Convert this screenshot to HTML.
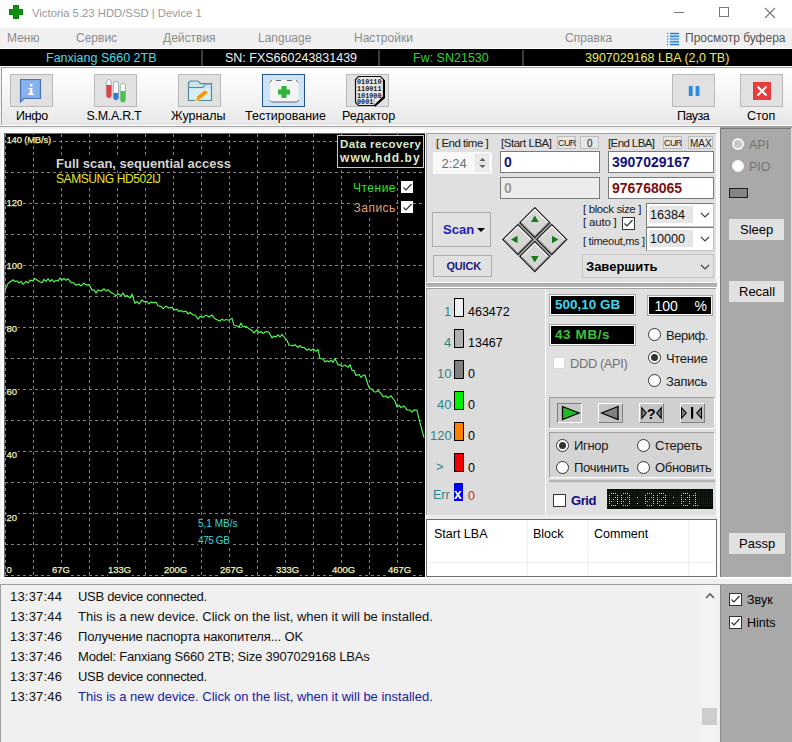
<!DOCTYPE html>
<html><head><meta charset="utf-8">
<style>
*{box-sizing:border-box;margin:0;padding:0}
html,body{width:792px;height:742px;overflow:hidden;background:#f0f0f0;font-family:"Liberation Sans",sans-serif;font-size:12px;color:#000}
.a{position:absolute}
.t{position:absolute;white-space:pre;line-height:1}
#title{left:0;top:0;width:792px;height:28px;background:#fff}
#menu{left:0;top:28px;width:792px;height:20px;background:#f0f0f0}
#menu .t{color:#8c8c8c;font-size:12px;top:3.5px}
#info{left:0;top:49px;width:792px;height:17px;background:#000}
#info .t{font-size:12.5px;top:3px}
.sep{position:absolute;top:1px;width:2px;height:16px;background:#3c3c3c}
#tb{left:1px;top:67px;width:791px;height:58px;border-top:1px solid #a0a0a0;border-left:1px solid #a0a0a0;background:linear-gradient(#ffffff,#f2f2f2 60%,#e6e6e6)}
.tbtn{position:absolute;width:43px;height:33px;background:#e1e1e1;border:1px solid #b9b9b9}
.tbtn.on{background:#cde4f7;border-color:#24528a}
.tlab{position:absolute;margin-top:-1px;font-size:12.5px;color:#000;white-space:pre;line-height:1}

.pnl{position:absolute;background:#e0e0e0;border-top:1px solid #a0a0a0;border-left:1px solid #a0a0a0;border-right:1px solid #fff;border-bottom:1px solid #fff}
.btn{position:absolute;background:#e1e1e1;border:1px solid #adadad}
.inp{position:absolute;background:#fff;border:1px solid #7a7a7a}
.rad{position:absolute;width:13px;height:13px;border-radius:50%;background:#fff;border:1px solid #333}
.rad.on::after{content:"";position:absolute;left:2px;top:2px;width:7px;height:7px;border-radius:50%;background:#333}
.chk{position:absolute;width:13px;height:13px;background:#fff;border:1px solid #333}
.lbl{position:absolute;white-space:pre;line-height:1;font-size:12px;color:#000}
.gl{font-size:9.5px;color:#f0f0b8;background:#000;padding:0 1px 1px 0;-webkit-text-stroke:0.25px #f0f0b8}
</style></head><body>

<!-- title bar -->
<div id="title" class="a">
  <svg class="a" style="left:9px;top:5px" width="14" height="14" viewBox="0 0 14 14"><path d="M4 0h6v4h4v6h-4v4h-6v-4h-4v-6h4z" fill="#087a08"/><path d="M4.6 0.6h4.8v4h4v4.8h-4v4h-4.8v-4h-4v-4.8h4z" fill="#0f8f0f"/></svg>
  <div class="t" style="left:32px;top:8px;font-size:11.3px;color:#999">Victoria 5.23 HDD/SSD | Device 1</div>
  <div class="a" style="left:674px;top:12px;width:10px;height:1px;background:#777"></div>
  <div class="a" style="left:719px;top:7px;width:10px;height:10px;border:1px solid #777"></div>
  <svg class="a" style="left:764px;top:7px" width="12" height="12" viewBox="0 0 12 12"><path d="M1 1L11 11M11 1L1 11" stroke="#777" stroke-width="1.1"/></svg>
</div>

<!-- menu -->
<div id="menu" class="a">
  <div class="t" style="left:7px">Меню</div>
  <div class="t" style="left:76px">Сервис</div>
  <div class="t" style="left:163px">Действия</div>
  <div class="t" style="left:258px">Language</div>
  <div class="t" style="left:354px">Настройки</div>
  <div class="t" style="left:565px">Справка</div>
  <svg class="a" style="left:660px;top:0" width="30" height="20" viewBox="660 28 30 20"><rect x="669.5" y="33" width="10" height="12" fill="#bfe4f8"/><g fill="#2f78c0"><rect x="667" y="32.8" width="1.2" height="1.2"/><rect x="667" y="35.6" width="1.2" height="1.2"/><rect x="667" y="38.4" width="1.2" height="1.2"/><rect x="667" y="41.2" width="1.2" height="1.2"/><rect x="667" y="44" width="1.2" height="1.2"/><rect x="670" y="32.8" width="9" height="1.3"/><rect x="670" y="35.6" width="9" height="1.3"/><rect x="670" y="38.4" width="9" height="1.3" fill="#4a94d8"/><rect x="670" y="41.2" width="9" height="1.3"/><rect x="670" y="44" width="9" height="1.3"/></g></svg>
  <div class="t" style="left:685px;color:#555">Просмотр буфера</div>
</div>
<div class="a" style="left:0;top:48px;width:792px;height:1px;background:#fff"></div>

<!-- info bar -->
<div id="info" class="a">
  <div class="t" style="left:46px;color:#48d8e8">Fanxiang S660 2TB</div>
  <div class="sep" style="left:201px"></div>
  <div class="t" style="left:225px;color:#f0f0f0">SN: FXS660243831439</div>
  <div class="sep" style="left:378px"></div>
  <div class="t" style="left:413px;color:#30d030">Fw: SN21530</div>
  <div class="sep" style="left:522px"></div>
  <div class="t" style="left:585px;color:#e8e860">3907029168 LBA (2,0 TB)</div>
</div>
<div class="a" style="left:0;top:66px;width:792px;height:1px;background:#fff"></div>

<!-- toolbar -->
<div id="tb" class="a"></div><div class="a" style="left:0;top:125px;width:792px;height:1px;background:#fff"></div>
<div class="tbtn" style="left:10px;top:74px"></div>
<div class="tbtn" style="left:94px;top:74px"></div>
<div class="tbtn" style="left:178px;top:74px"></div>
<div class="tbtn on" style="left:262px;top:74px"></div>
<div class="tbtn" style="left:346px;top:74px"></div>
<div class="tbtn" style="left:672px;top:74px"></div>
<div class="tbtn" style="left:740px;top:74px"></div>
<svg class="a" style="left:0;top:66px" width="792" height="44" viewBox="0 66 792 44">
 <!-- info bubble -->
 <path d="M20.5 79.5H40.5V98.5H24L20.5 102z" fill="#7fadea" stroke="#4a76b4" stroke-width="1.2"/>
 <path d="M22 81H39V97H22z" fill="#86b3ec"/>
 <rect x="30" y="84" width="2.4" height="2.4" fill="#fff"/>
 <path d="M28.5 88H32.4V93.5H34V95H28V93.5H29.8V89.3H28.5z" fill="#fff"/>
 <!-- smart tubes -->
 <rect x="106.3" y="79.5" width="5.2" height="18.5" rx="2.6" fill="#f4f4f4" stroke="#a0a8b8" stroke-width="0.8"/>
 <path d="M106.5 85H111.3V95.4A2.4 2.4 0 0 1 106.5 95.4z" fill="#e04040"/>
 <rect x="113.3" y="81.3" width="5.2" height="18.8" rx="2.6" fill="#f4f8ff" stroke="#8aa0c8" stroke-width="0.8"/>
 <path d="M113.5 93H118.3V97.5A2.4 2.4 0 0 1 113.5 97.5z" fill="#2a7ad8"/>
 <rect x="120.3" y="83.3" width="5.2" height="19" rx="2.6" fill="#f4fff4" stroke="#90b090" stroke-width="0.8"/>
 <path d="M120.5 91H125.3V99.8A2.4 2.4 0 0 1 120.5 99.8z" fill="#4cc04c"/>
 <!-- folder -->
 <path d="M188.5 83L190.5 81H198L200.5 83.5H211.5V100.5H188.5z" fill="#c8e4ef" stroke="#5a8898" stroke-width="1.2"/>
 <path d="M188.5 87.5H203L205 84H211.5" fill="none" stroke="#5a8898" stroke-width="1.1"/>
 <path d="M189.5 88.5H210.5V99.5H189.5z" fill="#d6eef6"/>
 <path d="M195 102L196.8 96L205 89.8L208.5 92.8L200.3 99.2z" fill="#f5980f" stroke="#fff" stroke-width="0.7"/>
 <!-- first aid -->
 <rect x="270" y="80" width="28.5" height="22" fill="#f4f4f4"/>
 <path d="M269.5 82.5L272 80M276 80.5H281M287 80.5H292M296 80L298.5 82.5M269.5 100L271.5 102H297L299 100" fill="none" stroke="#505a68" stroke-width="0.9"/>
 <path d="M281.5 86H286.5V89.5H290V94.5H286.5V98H281.5V94.5H278V89.5H281.5z" fill="#2fb43a"/>
 <!-- editor paper -->
 <path d="M358.5 76.5H380.5L383.5 79.5V97L374 105.5H358.5L355.5 102.5V79.5z" fill="#e6e6e6" stroke="#101010" stroke-width="1.2"/>
 <path d="M384 80V97.5L374.5 106" fill="none" stroke="#000" stroke-width="2"/>
 <path d="M374 105L374.5 98.5L382 97z" fill="#f8f8f8" stroke="#808080" stroke-width="0.6"/>
 <g font-family="Liberation Mono" font-size="7.6" fill="#1a1a1a" font-weight="bold">
  <text x="357" y="84.3" textLength="24.5" lengthAdjust="spacingAndGlyphs">010110</text>
  <text x="357" y="90.9" textLength="24.5" lengthAdjust="spacingAndGlyphs">110011</text>
  <text x="357" y="97.5" textLength="24.5" lengthAdjust="spacingAndGlyphs">101000</text>
  <text x="357" y="104" textLength="16.3" lengthAdjust="spacingAndGlyphs">0001</text>
 </g>
 <!-- pause -->
 <rect x="688.8" y="86" width="3.8" height="10" fill="#2a8ae0"/>
 <rect x="695.6" y="86" width="3.8" height="10" fill="#2a8ae0"/>
 <!-- stop -->
 <rect x="753" y="82" width="18" height="18" fill="#e83c3c"/>
 <path d="M757.5 86.5L766.5 95.5M766.5 86.5L757.5 95.5" stroke="#fff" stroke-width="2"/>
</svg>
<div class="tlab" style="left:16px;top:111px;letter-spacing:-0.3px">Инфо</div>
<div class="tlab" style="left:86.5px;top:111px;letter-spacing:-0.3px">S.M.A.R.T</div>
<div class="tlab" style="left:171px;top:111px">Журналы</div>
<div class="tlab" style="left:245px;top:111px">Тестирование</div>
<div class="tlab" style="left:342px;top:111px;letter-spacing:-0.1px">Редактор</div>
<div class="tlab" style="left:677px;top:111px;letter-spacing:-0.5px">Пауза</div>
<div class="tlab" style="left:747px;top:111px">Стоп</div>

<!-- graph -->
<div class="a" style="left:0;top:126px;width:426px;height:459px;background:#f0f0f0;border-top:1px solid #a0a0a0"></div>
<div class="a" style="left:1px;top:129px;width:425px;height:451px;background:#fff"></div>
<div class="a" style="left:4px;top:133px;width:421px;height:444px;background:#000;border-top:1px solid #696969;border-left:1px solid #696969"></div>
<svg class="a" style="left:0;top:0" width="426" height="580" viewBox="0 0 426 580">
<g stroke="#808080" stroke-width="1" stroke-dasharray="3 3">
<line x1="5.5" y1="134" x2="5.5" y2="577"/>
<line x1="33.5" y1="134" x2="33.5" y2="577"/>
<line x1="61.5" y1="134" x2="61.5" y2="577"/>
<line x1="89.5" y1="134" x2="89.5" y2="577"/>
<line x1="117.5" y1="134" x2="117.5" y2="577"/>
<line x1="145.5" y1="134" x2="145.5" y2="577"/>
<line x1="173.5" y1="134" x2="173.5" y2="577"/>
<line x1="201.5" y1="134" x2="201.5" y2="577"/>
<line x1="229.5" y1="134" x2="229.5" y2="577"/>
<line x1="257.5" y1="134" x2="257.5" y2="577"/>
<line x1="285.5" y1="134" x2="285.5" y2="577"/>
<line x1="313.5" y1="134" x2="313.5" y2="577"/>
<line x1="341.5" y1="134" x2="341.5" y2="577"/>
<line x1="369.5" y1="134" x2="369.5" y2="577"/>
<line x1="397.5" y1="134" x2="397.5" y2="577"/>
<line x1="5" y1="141.5" x2="425" y2="141.5"/>
<line x1="5" y1="172.5" x2="425" y2="172.5"/>
<line x1="5" y1="203.5" x2="425" y2="203.5"/>
<line x1="5" y1="234.5" x2="425" y2="234.5"/>
<line x1="5" y1="265.5" x2="425" y2="265.5"/>
<line x1="5" y1="296.5" x2="425" y2="296.5"/>
<line x1="5" y1="327.5" x2="425" y2="327.5"/>
<line x1="5" y1="358.5" x2="425" y2="358.5"/>
<line x1="5" y1="389.5" x2="425" y2="389.5"/>
<line x1="5" y1="420.5" x2="425" y2="420.5"/>
<line x1="5" y1="451.5" x2="425" y2="451.5"/>
<line x1="5" y1="482.5" x2="425" y2="482.5"/>
<line x1="5" y1="513.5" x2="425" y2="513.5"/>
<line x1="5" y1="544.5" x2="425" y2="544.5"/>
<line x1="5" y1="575.5" x2="425" y2="575.5"/>
</g>
<polyline fill="none" stroke="#52fa52" stroke-width="1.15" points="5,290.0 8,283.5 11,281.2 13,279.7 15,281.5 17,280.8 19,282.9 21,281.4 23,284.3 26,281.2 28,283.0 30,280.2 33,280.9 35,278.3 37,280.0 40,281.7 42,282.7 44,279.4 46,281.3 48,278.7 50,281.3 52,279.5 54,281.9 56,280.3 58,281.0 60,278.2 62,280.2 64,278.3 66,280.3 68,278.7 71,282.7 73,282.5 76,285.0 79,284.2 81,285.9 84,283.0 86,284.9 89,284.6 92,289.9 94,290.1 96,292.9 98,289.9 101,291.0 104,288.7 106,290.9 108,289.7 111,292.6 113,293.4 116,295.8 118,293.8 121,295.5 123,293.1 125,296.6 127,295.5 130,297.9 132,294.2 135,303.3 137,301.5 139,303.8 142,300.1 144,301.6 147,301.6 149,304.0 151,301.9 154,302.9 156,302.3 158,305.8 161,306.4 163,308.7 166,306.1 169,308.1 172,307.1 174,310.1 177,309.2 179,311.5 181,310.5 183,311.9 186,311.2 188,313.9 190,312.2 193,314.9 195,315.0 198,319.0 200,316.4 203,317.4 206,315.1 209,317.0 212,315.1 215,318.8 218,320.3 220,321.1 222,319.2 224,320.4 226,319.5 229,320.2 232,318.3 234,325.3 236,325.5 239,327.1 241,323.2 243,326.9 246,326.4 249,328.8 252,330.4 254,332.9 257,330.0 259,332.9 261,331.5 263,333.4 265,332.1 267,331.5 269,332.5 272,337.8 274,336.2 276,337.0 278,334.9 280,337.0 282,334.5 285,338.1 287,340.2 289,345.1 291,345.2 293,345.8 295,344.7 298,347.4 300,345.5 302,347.5 304,347.6 307,350.3 309,349.0 311,350.6 313,349.0 316,351.2 318,349.5 320,358.5 323,359.0 325,362.0 327,360.7 329,361.8 331,360.3 333,362.2 335,358.6 338,365.2 340,364.7 342,366.6 345,365.1 348,367.2 350,364.9 352,370.2 354,370.6 356,375.5 359,374.4 361,377.3 363,375.3 365,375.2 368,384.7 370,389.0 372,389.0 374,391.7 376,392.0 378,390.6 381,393.5 383,396.5 386,396.0 388,398.0 391,395.8 393,398.5 395,401.2 397,407.0 399,405.4 401,407.5 404,406.0 407,409.9 410,410.0 412,412.1 414,409.9 417,410.2 419,419.1 424,437.7"/>
</svg>

<div class="t gl" style="left:6.5px;top:135.2px;letter-spacing:-0.2px">140 (MB/s)</div>
<div class="t gl" style="left:6.5px;top:198.1px">120</div>
<div class="t gl" style="left:6.5px;top:261.2px">100</div>
<div class="t gl" style="left:6.5px;top:324.0px">80</div>
<div class="t gl" style="left:6.5px;top:386.8px">60</div>
<div class="t gl" style="left:6.5px;top:449.9px">40</div>
<div class="t gl" style="left:6.5px;top:513.1px">20</div>
<div class="t gl" style="left:6.5px;top:564.9px">0</div>
<div class="t gl" style="left:52px;top:565.2px">67G</div>
<div class="t gl" style="left:108px;top:565.2px">133G</div>
<div class="t gl" style="left:164px;top:565.2px">200G</div>
<div class="t gl" style="left:220px;top:565.2px">267G</div>
<div class="t gl" style="left:276px;top:565.2px">333G</div>
<div class="t gl" style="left:332px;top:565.2px">400G</div>
<div class="t gl" style="left:388px;top:565.2px">467G</div>
<div class="t" style="left:56px;top:156.8px;font-size:13px;font-weight:bold;color:#d4d4d4;background:#000;padding:0 1px 1px 0">Full scan, sequential access</div>
<div class="t" style="left:56px;top:173.3px;font-size:12px;letter-spacing:-0.42px;color:#e8e820;background:#000;padding-bottom:2px">SAMSUNG HD502IJ</div>
<div class="a" style="left:337px;top:135px;width:87px;height:33px;border:1px solid #c8c8c8;background:#000"></div>
<div class="t" style="left:340px;top:139px;font-size:11.5px;font-weight:bold;letter-spacing:0.4px;color:#dce8cc">Data recovery</div>
<div class="t" style="left:340px;top:152px;font-size:12px;font-weight:bold;letter-spacing:1.05px;color:#dce8cc">www.hdd.by</div>
<div class="t" style="left:353px;top:181.5px;font-size:12px;letter-spacing:0.5px;color:#30e030;background:#000;padding-bottom:2px">Чтение</div>
<div class="t" style="left:353.5px;top:201.5px;font-size:12px;letter-spacing:0.5px;color:#e0a070;background:#000;padding-bottom:2px">Запись</div>
<svg class="a" style="left:401px;top:181px" width="12" height="12" viewBox="0 0 12 12"><rect x="0" y="0" width="12" height="12" fill="#fff"/><path d="M2.5 6.5L5 9L10.5 3" fill="none" stroke="#333" stroke-width="1.2"/></svg>
<svg class="a" style="left:401px;top:201px" width="12" height="12" viewBox="0 0 12 12"><rect x="0" y="0" width="12" height="12" fill="#fff"/><path d="M2.5 6.5L5 9L10.5 3" fill="none" stroke="#333" stroke-width="1.2"/></svg>
<div class="t" style="left:198px;top:518.5px;font-size:10px;color:#38dada;background:#000;padding-bottom:1px">5,1 MB/s</div>
<div class="t" style="left:198px;top:535.5px;font-size:10px;letter-spacing:-0.4px;color:#38dada;background:#000;padding-bottom:1px">475 GB</div>

<!-- right gray panel -->
<div class="a" style="left:717px;top:126px;width:3px;height:459px;background:#f8f8f8"></div>
<div class="a" style="left:720px;top:126px;width:72px;height:453px;background:#a9a9a9;border-top:2px solid #a0a0a0"></div><div class="a" style="left:720px;top:128px;width:71px;height:451px;border-left:1px solid #7a7a7a;border-top:1px solid #7a7a7a"></div><div class="a" style="left:791px;top:128px;width:1px;height:451px;background:#dcdcdc"></div>
<div class="a" style="left:426px;top:126px;width:294px;height:7px;background:#f0f0f0;border-top:1px solid #a0a0a0"></div>
<div class="a" style="left:426px;top:130px;width:291px;height:3px;background:#fbfbfb"></div>

<!-- panel 1 -->
<div class="pnl" style="left:426px;top:133px;width:291px;height:150px"></div>
<div class="lbl" style="left:436px;top:138px;font-size:11.5px;letter-spacing:-0.5px;color:#202020">[ End time ]</div>
<div class="a" style="left:433px;top:152px;width:59px;height:22px;background:#f8f8f8"></div>
<div class="lbl" style="left:441.5px;top:157px;font-size:13px;color:#6e6e6e">2:24</div>
<div class="a" style="left:475px;top:154px;width:14px;height:18px;background:#ececec;border:1px solid #e4e4e4"></div>
<svg class="a" style="left:476px;top:154px" width="13" height="18" viewBox="0 0 13 18"><path d="M3.5 7L6.5 4L9.5 7z" fill="#606060"/><path d="M3.5 11L6.5 14L9.5 11z" fill="#606060"/><line x1="1" y1="9" x2="12" y2="9" stroke="#d8d8d8"/></svg>

<div class="lbl" style="left:501px;top:138px;font-size:11.5px;letter-spacing:-0.46px;color:#202020">[Start LBA]</div>
<div class="btn" style="left:557px;top:136px;width:19px;height:13px;background:#e6e6e6;border-color:#bdbdbd"></div>
<div class="lbl" style="left:558px;top:139px;font-size:9px;letter-spacing:-0.6px;color:#202020">CUR</div>
<div class="btn" style="left:580px;top:136px;width:19px;height:13px;background:#e6e6e6;border-color:#bdbdbd"></div>
<div class="lbl" style="left:587px;top:139px;font-size:10px;color:#202020">0</div>
<div class="inp" style="left:500px;top:151px;width:100px;height:22px"></div>
<div class="lbl" style="left:504px;top:155px;font-size:14px;font-weight:bold;color:#12127a">0</div>
<div class="inp" style="left:500px;top:177px;width:100px;height:22px;background:#ececec"></div>
<div class="lbl" style="left:504px;top:181px;font-size:14px;font-weight:bold;color:#9a9a9a">0</div>

<div class="lbl" style="left:608px;top:138px;font-size:11.5px;letter-spacing:-0.6px;color:#202020">[End LBA]</div>
<div class="btn" style="left:663px;top:136px;width:19px;height:13px;background:#e6e6e6;border-color:#bdbdbd"></div>
<div class="lbl" style="left:664px;top:139px;font-size:9px;letter-spacing:-0.6px;color:#202020">CUR</div>
<div class="btn" style="left:688px;top:136px;width:25px;height:13px;background:#e6e6e6;border-color:#bdbdbd"></div>
<div class="lbl" style="left:690px;top:139px;font-size:10px;color:#202020">MAX</div>
<div class="inp" style="left:608px;top:151px;width:106px;height:22px"></div>
<div class="lbl" style="left:612px;top:155px;font-size:14px;font-weight:bold;color:#12127a">3907029167</div>
<div class="inp" style="left:608px;top:177px;width:106px;height:22px"></div>
<div class="lbl" style="left:612px;top:181px;font-size:14px;font-weight:bold;color:#7a1010">976768065</div>

<div class="btn" style="left:432px;top:212px;width:59px;height:35px"></div>
<div class="lbl" style="left:443px;top:223px;font-size:13px;font-weight:bold;color:#2020b8">Scan</div>
<svg class="a" style="left:477px;top:228px" width="9" height="6" viewBox="0 0 9 6"><path d="M0 0H8L4 4z" fill="#000"/></svg>
<div class="btn" style="left:433px;top:255px;width:59px;height:22px"></div>
<div class="lbl" style="left:446.5px;top:261px;font-size:11px;letter-spacing:-0.2px;font-weight:bold;color:#202078">QUICK</div>

<svg class="a" style="left:500px;top:205px" width="70" height="70" viewBox="0 0 70 70">
 <g transform="translate(34.8 34.6) rotate(45)">
  <rect x="-23.3" y="-23.3" width="46.6" height="46.6" fill="#a0a0a0"/>
  <rect x="-22.5" y="-22.5" width="21" height="21" fill="#d6d6d6" stroke="#000" stroke-width="1"/><path d="M-21.5 -2.5V-21.5H-2.5" fill="none" stroke="#fff" stroke-width="1"/><path d="M-2.5 -21.5V-2.5H-21.5" fill="none" stroke="#909090" stroke-width="1"/><rect x="1.5" y="-22.5" width="21" height="21" fill="#d6d6d6" stroke="#000" stroke-width="1"/><path d="M2.5 -2.5V-21.5H21.5" fill="none" stroke="#fff" stroke-width="1"/><path d="M21.5 -21.5V-2.5H2.5" fill="none" stroke="#909090" stroke-width="1"/><rect x="-22.5" y="1.5" width="21" height="21" fill="#d6d6d6" stroke="#000" stroke-width="1"/><path d="M-21.5 21.5V2.5H-2.5" fill="none" stroke="#fff" stroke-width="1"/><path d="M-2.5 2.5V21.5H-21.5" fill="none" stroke="#909090" stroke-width="1"/><rect x="1.5" y="1.5" width="21" height="21" fill="#d6d6d6" stroke="#000" stroke-width="1"/><path d="M2.5 21.5V2.5H21.5" fill="none" stroke="#fff" stroke-width="1"/><path d="M21.5 2.5V21.5H2.5" fill="none" stroke="#909090" stroke-width="1"/>
 </g>
 <path d="M34.8 10.5L31 17H38.6z" fill="#157a15"/>
 <path d="M34.8 57.5L31 51H38.6z" fill="#157a15"/>
 <path d="M11 34.5L17.5 30.7V38.3z" fill="#157a15"/>
 <path d="M58.5 34.5L52 30.7V38.3z" fill="#157a15"/>
</svg>

<div class="lbl" style="left:583px;top:204px;font-size:11.5px;letter-spacing:-0.38px;color:#202020">[ block size ]</div>
<div class="lbl" style="left:583px;top:217px;font-size:11.5px;letter-spacing:-0.2px;color:#202020">[ auto ]</div>
<div class="chk" style="left:622px;top:217px;width:13px;height:13px"></div>
<svg class="a" style="left:622px;top:217px" width="13" height="13" viewBox="0 0 13 13"><path d="M2.5 6.5L5 9L10.5 3" fill="none" stroke="#333" stroke-width="1.2"/></svg>
<div class="lbl" style="left:583px;top:236px;font-size:11px;letter-spacing:-0.3px;color:#202020">[ timeout,ms ]</div>
<div class="inp" style="left:646px;top:203px;width:68px;height:24px;border:1px solid #7a7a7a;border-right-color:#c0c0c0;border-bottom-color:#c0c0c0"></div>
<div class="a" style="left:649px;top:206px;width:44px;height:17px;background:#e6e6e6"></div>
<div class="lbl" style="left:650px;top:208.5px;font-size:12.6px;color:#101010">16384</div>
<svg class="a" style="left:700px;top:212px" width="10" height="7" viewBox="0 0 10 7"><path d="M1 1L5 5L9 1" fill="none" stroke="#404040" stroke-width="1.1"/></svg>
<div class="inp" style="left:646px;top:227px;width:68px;height:24px;border:1px solid #7a7a7a;border-right-color:#c0c0c0;border-bottom-color:#c0c0c0"></div>
<div class="a" style="left:649px;top:230px;width:44px;height:17px;background:#e6e6e6"></div>
<div class="lbl" style="left:650px;top:232.5px;font-size:12.6px;color:#101010">10000</div>
<svg class="a" style="left:700px;top:236px" width="10" height="7" viewBox="0 0 10 7"><path d="M1 1L5 5L9 1" fill="none" stroke="#404040" stroke-width="1.1"/></svg>
<div class="btn" style="left:582px;top:254px;width:132px;height:24px;background:#e1e1e1;border-color:#c4c4c4"></div>
<div class="lbl" style="left:586px;top:260px;font-size:13px;font-weight:bold;color:#000">Завершить</div>
<svg class="a" style="left:700px;top:264px" width="10" height="7" viewBox="0 0 10 7"><path d="M1 1L5 5L9 1" fill="none" stroke="#404040" stroke-width="1.1"/></svg>

<!-- separator band -->
<div class="a" style="left:426px;top:283px;width:291px;height:5px;background:#b4b4b4;border-top:1px solid #a0a0a0;border-bottom:1px solid #fff"></div>


<!-- panel 2 -->
<div class="a" style="left:426px;top:288px;width:291px;height:227px;background:#dcdcdc;border-top:1px solid #a0a0a0;border-left:1px solid #a0a0a0"></div>
<div class="a" style="left:545px;top:289px;width:1px;height:226px;background:#fff"></div>
<div class="a" style="left:546px;top:289px;width:171px;height:226px;background:#e0e0e0"></div>
<div class="a" style="left:716px;top:288px;width:1px;height:227px;background:#fff"></div>

<div class="lbl" style="left:444px;top:305px;font-size:13px;color:#2f8585">1</div>
<div class="a" style="left:454px;top:298px;width:10px;height:19px;background:#f0f0f0;border:1px solid #000"></div>
<div class="lbl" style="left:468px;top:306px;font-size:12.5px;color:#000">463472</div>
<div class="lbl" style="left:444px;top:336px;font-size:13px;color:#2f8585">4</div>
<div class="a" style="left:454px;top:329px;width:10px;height:19px;background:#b0b0b0;border:1px solid #000"></div>
<div class="lbl" style="left:468px;top:337px;font-size:12.5px;color:#000">13467</div>
<div class="lbl" style="left:437px;top:367px;font-size:13px;color:#2f8585">10</div>
<div class="a" style="left:454px;top:360px;width:10px;height:19px;background:#808080;border:1px solid #000"></div>
<div class="lbl" style="left:468px;top:368px;font-size:12.5px;color:#000">0</div>
<div class="lbl" style="left:437px;top:398px;font-size:13px;color:#2f8585">40</div>
<div class="a" style="left:454px;top:391px;width:10px;height:19px;background:#00ee00;border:1px solid #000"></div>
<div class="lbl" style="left:468px;top:399px;font-size:12.5px;color:#000">0</div>
<div class="lbl" style="left:430px;top:429px;font-size:13px;color:#2f8585">120</div>
<div class="a" style="left:454px;top:422px;width:10px;height:19px;background:#ff8000;border:1px solid #000"></div>
<div class="lbl" style="left:468px;top:430px;font-size:12.5px;color:#000">0</div>
<div class="lbl" style="left:436px;top:460px;font-size:13px;color:#2f8585">&gt;</div>
<div class="a" style="left:454px;top:453px;width:10px;height:19px;background:#ee0000;border:1px solid #000"></div>
<div class="lbl" style="left:468px;top:462px;font-size:12.5px;color:#000">0</div>
<div class="lbl" style="left:433px;top:489px;font-size:12.5px;color:#2f8585">Err</div>
<div class="a" style="left:454px;top:483px;width:9px;height:18px;background:#0000ee"></div>
<div class="lbl" style="left:454px;top:487px;font-size:14px;font-weight:bold;color:#fff">x</div>
<div class="lbl" style="left:468px;top:490px;font-size:12.5px;color:#e02020">0</div>

<div class="a" style="left:549px;top:294px;width:87px;height:22px;background:#fff;border:1px solid #a8a8a8"></div>
<div class="a" style="left:551px;top:296px;width:83px;height:18px;background:#000"></div>
<div class="lbl" style="left:555px;top:298px;font-size:13.5px;font-weight:bold;color:#3ad8ec">500,10 GB</div>
<div class="a" style="left:647px;top:295px;width:66px;height:21px;background:#fff;border:1px solid #a8a8a8"></div>
<div class="a" style="left:649px;top:297px;width:62px;height:17px;background:#000"></div>
<div class="lbl" style="left:654.5px;top:299px;font-size:14px;color:#fff">100</div>
<div class="lbl" style="left:694.5px;top:299px;font-size:14px;color:#fff">%</div>
<div class="a" style="left:549px;top:324px;width:87px;height:22px;background:#fff;border:1px solid #a8a8a8"></div>
<div class="a" style="left:551px;top:326px;width:83px;height:18px;background:#000"></div>
<div class="lbl" style="left:555px;top:328px;font-size:13.5px;font-weight:bold;letter-spacing:0.6px;color:#3cc03c">43 MB/s</div>

<div class="rad" style="left:648px;top:328px"></div>
<div class="lbl" style="left:666px;top:329px;font-size:13px;letter-spacing:-0.5px;color:#1a1a1a">Вериф.</div>
<div class="rad on" style="left:648px;top:351px"></div>
<div class="lbl" style="left:666px;top:352px;font-size:13px;letter-spacing:-0.35px;color:#1a1a1a">Чтение</div>
<div class="rad" style="left:648px;top:374px"></div>
<div class="lbl" style="left:666px;top:375px;font-size:13px;letter-spacing:-0.3px;color:#1a1a1a">Запись</div>
<div class="a" style="left:553px;top:357px;width:12px;height:12px;background:#fff;border:1px solid #d8d8d8"></div>
<div class="lbl" style="left:570px;top:357px;font-size:13px;letter-spacing:-0.45px;color:#727272">DDD (API)</div>

<div class="a" style="left:549px;top:397px;width:166px;height:32px;background:#d0d0d0;border-top:1px solid #a0a0a0;border-left:1px solid #a0a0a0;border-bottom:1px solid #fff;border-right:1px solid #fff"></div>
<div class="a" style="left:557px;top:403px;width:25px;height:20px;background:#c8c8c8;border-top:1px solid #808080;border-left:1px solid #808080;border-bottom:1px solid #fff;border-right:1px solid #fff"></div>
<svg class="a" style="left:561px;top:405px" width="20" height="16" viewBox="0 0 20 16"><path d="M1.5 1.5L18 8L1.5 14.5z" fill="#22bb22" stroke="#000" stroke-width="1.3"/></svg>
<div class="a" style="left:598px;top:403px;width:25px;height:20px;background:#c4c4c4;border-top:1px solid #fff;border-left:1px solid #fff;border-bottom:1px solid #808080;border-right:1px solid #808080"></div>
<svg class="a" style="left:600px;top:405px" width="20" height="16" viewBox="0 0 20 16"><path d="M18 1.5L1.5 8L18 14.5z" fill="#808080" stroke="#000" stroke-width="1.3"/></svg>
<div class="a" style="left:639px;top:403px;width:25px;height:20px;background:#c4c4c4;border-top:1px solid #fff;border-left:1px solid #fff;border-bottom:1px solid #808080;border-right:1px solid #808080"></div>
<svg class="a" style="left:636px;top:400px" width="72" height="26" viewBox="636 400 72 26"><path d="M641.8 407.8L646.3 413L641.8 418.2z" fill="#808080" stroke="#000" stroke-width="1.1"/><path d="M661.2 407.8L656.7 413L661.2 418.2z" fill="#808080" stroke="#000" stroke-width="1.1"/><text x="651.3" y="418.6" text-anchor="middle" font-family="Liberation Sans" font-weight="bold" font-size="14.5" fill="#000">?</text></svg>
<div class="a" style="left:680px;top:403px;width:25px;height:20px;background:#c4c4c4;border-top:1px solid #fff;border-left:1px solid #fff;border-bottom:1px solid #808080;border-right:1px solid #808080"></div>
<svg class="a" style="left:636px;top:400px" width="72" height="26" viewBox="636 400 72 26"><path d="M681.5 407.8L686.3 413L681.5 418.2z" fill="#808080" stroke="#000" stroke-width="1.1"/><path d="M701.5 407.8L696.7 413L701.5 418.2z" fill="#808080" stroke="#000" stroke-width="1.1"/><rect x="691" y="407" width="2.2" height="11.6" fill="#000"/></svg>

<div class="a" style="left:549px;top:432px;width:166px;height:46px;background:#d4d4d4;border-top:1px solid #a0a0a0;border-left:1px solid #a0a0a0;border-bottom:1px solid #fff;border-right:1px solid #fff"></div>
<div class="rad on" style="left:556px;top:439px"></div>
<div class="lbl" style="left:574px;top:439px;font-size:13px;letter-spacing:-0.3px;color:#1a1a1a">Игнор</div>
<div class="rad" style="left:637px;top:439px"></div>
<div class="lbl" style="left:655px;top:439px;font-size:13px;letter-spacing:-0.3px;color:#1a1a1a">Стереть</div>
<div class="rad" style="left:556px;top:461px"></div>
<div class="lbl" style="left:574px;top:461px;font-size:13px;letter-spacing:-0.3px;color:#1a1a1a">Починить</div>
<div class="rad" style="left:637px;top:461px"></div>
<div class="lbl" style="left:655px;top:461px;font-size:13px;letter-spacing:-0.3px;color:#1a1a1a">Обновить</div>

<div class="a" style="left:549px;top:479px;width:166px;height:4px;background:#d8d8d8"></div><div class="a" style="left:549px;top:480px;width:166px;height:2px;background:#b4b4b4"></div>
<div class="chk" style="left:553px;top:494px;width:13px;height:13px"></div>
<div class="lbl" style="left:571px;top:494px;font-size:13px;letter-spacing:-0.4px;font-weight:bold;color:#0c0c7c">Grid</div>
<svg class="a" style="left:0;top:0" width="716" height="512" viewBox="0 0 716 512">
<defs><pattern id="ledp" x="607" y="491" width="2" height="2" patternUnits="userSpaceOnUse"><rect x="0" y="0" width="1" height="1" fill="#1a2a14"/></pattern></defs>
<rect x="607" y="489" width="106" height="20" fill="#070d07"/>
<rect x="607" y="491" width="106" height="16" fill="url(#ledp)"/>
<g fill="#dce4a0"><rect x="611" y="493" width="1" height="1"/><rect x="613" y="493" width="1" height="1"/><rect x="615" y="493" width="1" height="1"/><rect x="609" y="495" width="1" height="1"/><rect x="617" y="495" width="1" height="1"/><rect x="609" y="497" width="1" height="1"/><rect x="615" y="497" width="1" height="1"/><rect x="617" y="497" width="1" height="1"/><rect x="609" y="499" width="1" height="1"/><rect x="613" y="499" width="1" height="1"/><rect x="617" y="499" width="1" height="1"/><rect x="609" y="501" width="1" height="1"/><rect x="611" y="501" width="1" height="1"/><rect x="617" y="501" width="1" height="1"/><rect x="609" y="503" width="1" height="1"/><rect x="617" y="503" width="1" height="1"/><rect x="611" y="505" width="1" height="1"/><rect x="613" y="505" width="1" height="1"/><rect x="615" y="505" width="1" height="1"/><rect x="623" y="493" width="1" height="1"/><rect x="625" y="493" width="1" height="1"/><rect x="627" y="493" width="1" height="1"/><rect x="621" y="495" width="1" height="1"/><rect x="629" y="495" width="1" height="1"/><rect x="621" y="497" width="1" height="1"/><rect x="627" y="497" width="1" height="1"/><rect x="629" y="497" width="1" height="1"/><rect x="621" y="499" width="1" height="1"/><rect x="625" y="499" width="1" height="1"/><rect x="629" y="499" width="1" height="1"/><rect x="621" y="501" width="1" height="1"/><rect x="623" y="501" width="1" height="1"/><rect x="629" y="501" width="1" height="1"/><rect x="621" y="503" width="1" height="1"/><rect x="629" y="503" width="1" height="1"/><rect x="623" y="505" width="1" height="1"/><rect x="625" y="505" width="1" height="1"/><rect x="627" y="505" width="1" height="1"/><rect x="637" y="497" width="1" height="1"/><rect x="637" y="503" width="1" height="1"/><rect x="647" y="493" width="1" height="1"/><rect x="649" y="493" width="1" height="1"/><rect x="651" y="493" width="1" height="1"/><rect x="645" y="495" width="1" height="1"/><rect x="653" y="495" width="1" height="1"/><rect x="645" y="497" width="1" height="1"/><rect x="651" y="497" width="1" height="1"/><rect x="653" y="497" width="1" height="1"/><rect x="645" y="499" width="1" height="1"/><rect x="649" y="499" width="1" height="1"/><rect x="653" y="499" width="1" height="1"/><rect x="645" y="501" width="1" height="1"/><rect x="647" y="501" width="1" height="1"/><rect x="653" y="501" width="1" height="1"/><rect x="645" y="503" width="1" height="1"/><rect x="653" y="503" width="1" height="1"/><rect x="647" y="505" width="1" height="1"/><rect x="649" y="505" width="1" height="1"/><rect x="651" y="505" width="1" height="1"/><rect x="659" y="493" width="1" height="1"/><rect x="661" y="493" width="1" height="1"/><rect x="663" y="493" width="1" height="1"/><rect x="657" y="495" width="1" height="1"/><rect x="665" y="495" width="1" height="1"/><rect x="657" y="497" width="1" height="1"/><rect x="663" y="497" width="1" height="1"/><rect x="665" y="497" width="1" height="1"/><rect x="657" y="499" width="1" height="1"/><rect x="661" y="499" width="1" height="1"/><rect x="665" y="499" width="1" height="1"/><rect x="657" y="501" width="1" height="1"/><rect x="659" y="501" width="1" height="1"/><rect x="665" y="501" width="1" height="1"/><rect x="657" y="503" width="1" height="1"/><rect x="665" y="503" width="1" height="1"/><rect x="659" y="505" width="1" height="1"/><rect x="661" y="505" width="1" height="1"/><rect x="663" y="505" width="1" height="1"/><rect x="673" y="497" width="1" height="1"/><rect x="673" y="503" width="1" height="1"/><rect x="683" y="493" width="1" height="1"/><rect x="685" y="493" width="1" height="1"/><rect x="687" y="493" width="1" height="1"/><rect x="681" y="495" width="1" height="1"/><rect x="689" y="495" width="1" height="1"/><rect x="681" y="497" width="1" height="1"/><rect x="687" y="497" width="1" height="1"/><rect x="689" y="497" width="1" height="1"/><rect x="681" y="499" width="1" height="1"/><rect x="685" y="499" width="1" height="1"/><rect x="689" y="499" width="1" height="1"/><rect x="681" y="501" width="1" height="1"/><rect x="683" y="501" width="1" height="1"/><rect x="689" y="501" width="1" height="1"/><rect x="681" y="503" width="1" height="1"/><rect x="689" y="503" width="1" height="1"/><rect x="683" y="505" width="1" height="1"/><rect x="685" y="505" width="1" height="1"/><rect x="687" y="505" width="1" height="1"/><rect x="695" y="493" width="1" height="1"/><rect x="693" y="495" width="1" height="1"/><rect x="695" y="495" width="1" height="1"/><rect x="695" y="497" width="1" height="1"/><rect x="695" y="499" width="1" height="1"/><rect x="695" y="501" width="1" height="1"/><rect x="695" y="503" width="1" height="1"/><rect x="693" y="505" width="1" height="1"/><rect x="695" y="505" width="1" height="1"/><rect x="697" y="505" width="1" height="1"/></g>
</svg>

<!-- table -->
<div class="a" style="left:426px;top:515px;width:291px;height:4px;background:#ececec"></div>
<div class="a" style="left:426px;top:519px;width:291px;height:58px;background:#fff;border:1px solid #6e6e6e"></div>
<div class="a" style="left:527px;top:521px;width:1px;height:55px;background:#f0f0f0"></div>
<div class="a" style="left:587px;top:521px;width:1px;height:55px;background:#f0f0f0"></div>
<div class="a" style="left:688px;top:521px;width:1px;height:55px;background:#f0f0f0"></div>
<div class="a" style="left:427px;top:562px;width:289px;height:1px;background:#f0f0f0"></div>
<div class="lbl" style="left:434px;top:528px;font-size:12.5px">Start LBA</div>
<div class="lbl" style="left:533px;top:528px;font-size:12.5px">Block</div>
<div class="lbl" style="left:594px;top:528px;font-size:12.5px">Comment</div>


<!-- right panel contents -->
<div class="a" style="left:731.5px;top:138px;width:12px;height:12px;border-radius:50%;background:#c8c8c8;border:2px solid #f4f4f4"></div>
<div class="lbl" style="left:749px;top:139px;font-size:12.5px;color:#747474">API</div>
<div class="a" style="left:731.5px;top:160px;width:12px;height:12px;border-radius:50%;background:#fff;border:1px solid #f4f4f4"></div>
<div class="lbl" style="left:749px;top:161px;font-size:12.5px;color:#747474">PIO</div>
<div class="a" style="left:729px;top:188px;width:19px;height:10px;background:#848484;border:1px solid #202020"></div>
<div class="btn" style="left:729px;top:219px;width:55px;height:21px;background:#e1e1e1;border:none"></div>
<div class="lbl" style="left:740px;top:223px;font-size:13px">Sleep</div>
<div class="btn" style="left:729px;top:281px;width:55px;height:21px;background:#e1e1e1;border:none"></div>
<div class="lbl" style="left:739px;top:285px;font-size:13px">Recall</div>
<div class="btn" style="left:729px;top:533px;width:56px;height:21px;background:#e1e1e1;border:none"></div>
<div class="lbl" style="left:739px;top:537px;font-size:13px">Passp</div>

<!-- band between top and log -->
<div class="a" style="left:0;top:577px;width:792px;height:2px;background:#fff"></div>
<div class="a" style="left:0;top:579px;width:792px;height:5px;background:#f0f0f0"></div>
<div class="a" style="left:0;top:584px;width:792px;height:1px;background:#a0a0a0"></div>

<!-- log -->
<div class="a" style="left:0;top:585px;width:718px;height:157px;background:#f0f0f0;border-left:1px solid #a0a0a0"></div>
<div class="a" style="left:702px;top:585px;width:16px;height:157px;background:#f3f3f3"></div>
<svg class="a" style="left:704px;top:592px" width="12" height="8" viewBox="0 0 12 8"><path d="M2 6L6 2L10 6" fill="none" stroke="#606060" stroke-width="1.6"/></svg>
<div class="a" style="left:702px;top:708px;width:15px;height:17px;background:#cdcdcd"></div>
<div class="lbl" style="left:10px;top:590px;font-size:13px;letter-spacing:0.2px;color:#101010">13:37:44</div>
<div class="lbl" style="left:78px;top:590px;font-size:13px;letter-spacing:-0.3px;color:#101010">USB device connected.</div>
<div class="lbl" style="left:10px;top:610px;font-size:13px;letter-spacing:0.2px;color:#101010">13:37:44</div>
<div class="lbl" style="left:78px;top:610px;font-size:13px;color:#101010">This is a new device. Click on the list, when it will be installed.</div>
<div class="lbl" style="left:10px;top:630px;font-size:13px;letter-spacing:0.2px;color:#101010">13:37:46</div>
<div class="lbl" style="left:78px;top:630px;font-size:13px;letter-spacing:-0.16px;color:#101010">Получение паспорта накопителя... OK</div>
<div class="lbl" style="left:10px;top:650px;font-size:13px;letter-spacing:0.2px;color:#101010">13:37:46</div>
<div class="lbl" style="left:78px;top:650px;font-size:13px;letter-spacing:-0.2px;color:#101010">Model: Fanxiang S660 2TB; Size 3907029168 LBAs</div>
<div class="lbl" style="left:10px;top:670px;font-size:13px;letter-spacing:0.2px;color:#101010">13:37:46</div>
<div class="lbl" style="left:78px;top:670px;font-size:13px;letter-spacing:-0.3px;color:#101010">USB device connected.</div>
<div class="lbl" style="left:10px;top:690px;font-size:13px;letter-spacing:0.2px;color:#101010">13:37:46</div>
<div class="lbl" style="left:78px;top:690px;font-size:13px;color:#1a1aa0">This is a new device. Click on the list, when it will be installed.</div>

<!-- right lower panel -->
<div class="a" style="left:718px;top:585px;width:2px;height:157px;background:#f0f0f0"></div>
<div class="a" style="left:720px;top:585px;width:72px;height:157px;background:#aaaaaa;border-left:1px solid #8c8c8c"></div>
<div class="chk" style="left:729px;top:593px"></div>
<svg class="a" style="left:729px;top:593px" width="13" height="13" viewBox="0 0 13 13"><path d="M2.5 6.5L5 9L10.5 3" fill="none" stroke="#333" stroke-width="1.2"/></svg>
<div class="lbl" style="left:747px;top:594px;font-size:12.5px">Звук</div>
<div class="chk" style="left:729px;top:616px"></div>
<svg class="a" style="left:729px;top:616px" width="13" height="13" viewBox="0 0 13 13"><path d="M2.5 6.5L5 9L10.5 3" fill="none" stroke="#333" stroke-width="1.2"/></svg>
<div class="lbl" style="left:747px;top:617px;font-size:12.5px">Hints</div>

</body></html>
